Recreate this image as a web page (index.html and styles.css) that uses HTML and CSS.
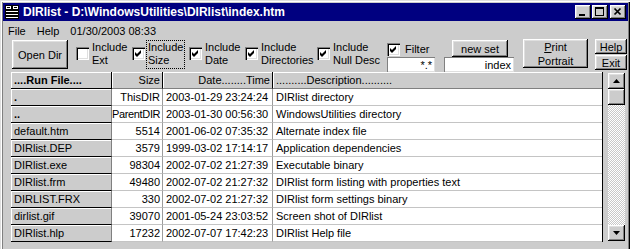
FILE: index.html
```html
<!DOCTYPE html>
<html>
<head>
<meta charset="utf-8">
<title>DIRlist</title>
<link rel="stylesheet" href="styles.css">
</head>
<body>
<div class="window">
  <div class="titlebar">
    <svg class="appicon" viewBox="0 0 16 16" width="16" height="16">
      <rect x="1" y="1" width="14" height="14" fill="#000"/>
      <rect x="2" y="2" width="5" height="3" fill="#fff"/>
      <rect x="9" y="2" width="5" height="3" fill="#fff"/>
      <rect x="3" y="3" width="3" height="1" fill="#000"/>
      <rect x="10" y="3" width="3" height="1" fill="#000"/>
      <rect x="2" y="7" width="12" height="1" fill="#fff"/>
      <rect x="2" y="10" width="12" height="1" fill="#fff"/>
      <rect x="2" y="13" width="12" height="1" fill="#fff"/>
    </svg>
    <span class="title">DIRlist - D:\WindowsUtilities\DIRlist\index.htm</span>
    <div class="wbtns">
      <span class="wbtn"><svg viewBox="0 0 16 14" width="16" height="14"><rect x="4" y="9" width="6" height="2" fill="#000"/></svg></span>
      <span class="wbtn"><svg viewBox="0 0 16 14" width="16" height="14"><rect x="3" y="2" width="9" height="2" fill="#000"/><rect x="3" y="2" width="1" height="9" fill="#000"/><rect x="11" y="2" width="1" height="9" fill="#000"/><rect x="3" y="10" width="9" height="1" fill="#000"/></svg></span>
      <span class="wbtn close"><svg viewBox="0 0 16 14" width="16" height="14"><path d="M4.5 3.5 L10.5 9.5 M10.5 3.5 L4.5 9.5" stroke="#000" stroke-width="1.7" fill="none"/></svg></span>
    </div>
  </div>

  <div class="menubar">
    <span class="mi">File</span>
    <span class="mi">Help</span>
    <span class="mi">01/30/2003 08:33</span>
  </div>

  <div class="toolbar">
    <div class="btn opendir">Open Dir</div>

    <div class="chk w-ext">
      <span class="box"></span>
      <span class="lbl">Include<br>Ext</span>
    </div>
    <div class="chk w-size">
      <span class="box"><svg viewBox="0 0 7 7" width="7" height="7"><polygon points="0,2 2,4 6,0 6,3 2,7 0,5" fill="#000"/></svg></span>
      <span class="lbl focus">Include<br>Size</span>
    </div>
    <div class="chk w-date">
      <span class="box"><svg viewBox="0 0 7 7" width="7" height="7"><polygon points="0,2 2,4 6,0 6,3 2,7 0,5" fill="#000"/></svg></span>
      <span class="lbl">Include<br>Date</span>
    </div>
    <div class="chk w-dirs">
      <span class="box"><svg viewBox="0 0 7 7" width="7" height="7"><polygon points="0,2 2,4 6,0 6,3 2,7 0,5" fill="#000"/></svg></span>
      <span class="lbl">Include<br>Directories</span>
    </div>
    <div class="chk w-null">
      <span class="box"><svg viewBox="0 0 7 7" width="7" height="7"><polygon points="0,2 2,4 6,0 6,3 2,7 0,5" fill="#000"/></svg></span>
      <span class="lbl">Include<br>Null Desc</span>
    </div>

    <div class="filtercol">
      <div class="filterrow">
        <span class="box fbox"><svg viewBox="0 0 7 7" width="7" height="7"><polygon points="0,2 2,4 6,0 6,3 2,7 0,5" fill="#000"/></svg></span>
        <span class="flbl">Filter</span>
      </div>
      <div class="tbox w-filter">*.*</div>
    </div>

    <div class="setcol">
      <div class="btn newset">new set</div>
      <div class="tbox w-index">index</div>
    </div>

    <div class="btn print"><span><u>P</u>rint</span><span>Portrait</span></div>

    <div class="hecol">
      <div class="btn small">Help</div>
      <div class="btn small exit">Exit</div>
    </div>
  </div>

  <div class="main">
    <div class="grid">
      <div class="row hd">
        <div class="c fx b">....Run File....</div>
        <div class="c r">Size</div>
        <div class="c r">Date........Time</div>
        <div class="c last">..........Description..........</div>
      </div>
      <div class="row">
        <div class="c fx b">.</div>
        <div class="c r">ThisDIR</div>
        <div class="c">2003-01-29 23:24:24</div>
        <div class="c last">DIRlist directory</div>
      </div>
      <div class="row">
        <div class="c fx b">..</div>
        <div class="c r tight">ParentDIR</div>
        <div class="c">2003-01-30 00:56:30</div>
        <div class="c last">WindowsUtilities directory</div>
      </div>
      <div class="row">
        <div class="c fx">default.htm</div>
        <div class="c r">5514</div>
        <div class="c">2001-06-02 07:35:32</div>
        <div class="c last">Alternate index file</div>
      </div>
      <div class="row">
        <div class="c fx">DIRlist.DEP</div>
        <div class="c r">3579</div>
        <div class="c">1999-03-02 17:14:17</div>
        <div class="c last">Application dependencies</div>
      </div>
      <div class="row">
        <div class="c fx">DIRlist.exe</div>
        <div class="c r">98304</div>
        <div class="c">2002-07-02 21:27:39</div>
        <div class="c last">Executable binary</div>
      </div>
      <div class="row">
        <div class="c fx">DIRlist.frm</div>
        <div class="c r">49480</div>
        <div class="c">2002-07-02 21:27:32</div>
        <div class="c last">DIRlist form listing with properties text</div>
      </div>
      <div class="row">
        <div class="c fx">DIRLIST.FRX</div>
        <div class="c r">330</div>
        <div class="c">2002-07-02 21:27:32</div>
        <div class="c last">DIRlist form settings binary</div>
      </div>
      <div class="row">
        <div class="c fx">dirlist.gif</div>
        <div class="c r">39070</div>
        <div class="c">2001-05-24 23:03:52</div>
        <div class="c last">Screen shot of DIRlist</div>
      </div>
      <div class="row">
        <div class="c fx">DIRlist.hlp</div>
        <div class="c r">17232</div>
        <div class="c">2002-07-07 17:42:23</div>
        <div class="c last">DIRlist Help file</div>
      </div>
    </div>

    <div class="scrollbar">
      <div class="sbtn"><svg viewBox="0 0 7 4" width="7" height="4"><polygon points="3.5,0 7,4 0,4" fill="#000"/></svg></div>
      <div class="sbtn thumb"></div>
      <div class="track"></div>
      <div class="sbtn"><svg viewBox="0 0 7 4" width="7" height="4"><polygon points="0,0 7,0 3.5,4" fill="#000"/></svg></div>
    </div>
  </div>
</div>
</body>
</html>
```

FILE: styles.css
```css
* { box-sizing: border-box; }

html, body {
  margin: 0;
  padding: 0;
}

body {
  width: 630px;
  height: 249px;
  overflow: hidden;
  background: #cccccc;
  font-family: "Liberation Sans", Arial, sans-serif;
  font-size: 11px;
  color: #000;
}

.window {
  width: 630px;
  height: 249px;
  background: #cccccc;
  padding: 3px 2px 0 3px;
  overflow: hidden;
  box-shadow:
    inset 1px 1px 0 #dfdfdf,
    inset 2px 2px 0 #ffffff,
    inset 3px 0 0 #808080,
    inset -1px 0 0 #000000,
    inset -2px 0 0 #808080;
}

/* ---------- title bar ---------- */
.titlebar {
  height: 18px;
  background: #000080;
  color: #fff;
  display: flex;
  align-items: center;
  padding-left: 1px;
}

.appicon {
  flex-shrink: 0;
  margin-right: 3px;
}

.title {
  flex: 1;
  font-weight: bold;
  font-size: 12px;
  line-height: 18px;
  white-space: nowrap;
}

.wbtns {
  display: flex;
  margin-right: 2px;
}

.wbtn {
  width: 16px;
  height: 14px;
  background: #cccccc;
  display: flex;
  box-shadow:
    inset -1px -1px 0 #000,
    inset 1px 1px 0 #fff,
    inset -2px -2px 0 #808080,
    inset 2px 2px 0 #dfdfdf;
}

.wbtn + .wbtn { margin-left: 1px; }
.wbtn.close { margin-left: 2px; }

/* ---------- menu ---------- */
.menubar {
  height: 16px;
  padding: 4px 0 0 5px;
  line-height: 12px;
  display: flex;
  white-space: nowrap;
}

.mi { margin-right: 11px; }

/* ---------- toolbar ---------- */
.toolbar {
  height: 35px;
  display: flex;
  align-items: flex-start;
}

.toolbar > * { flex-shrink: 0; }

.btn {
  background: #cccccc;
  display: flex;
  align-items: center;
  justify-content: center;
  white-space: nowrap;
  box-shadow:
    inset -1px -1px 0 #000,
    inset 1px 1px 0 #fff,
    inset -2px -2px 0 #808080,
    inset 2px 2px 0 #dfdfdf;
}

.opendir {
  margin-left: 9px;
  margin-top: 3px;
  width: 56px;
  height: 29px;
}

.chk {
  display: flex;
  align-items: flex-start;
  margin-top: 3px;
}

.w-ext  { margin-left: 8px; width: 56px; }
.w-size { width: 57px; }
.w-date { width: 56px; }
.w-dirs { width: 72px; }
.w-null { width: 70px; }

.box {
  width: 13px;
  height: 13px;
  flex-shrink: 0;
  background: #fff;
  margin-top: 7px;
  margin-right: 1px;
  display: flex;
  align-items: center;
  justify-content: center;
  box-shadow:
    inset 1px 1px 0 #808080,
    inset 2px 2px 0 #000,
    inset -1px -1px 0 #fff,
    inset -2px -2px 0 #dfdfdf;
}

.lbl {
  line-height: 13px;
  padding: 0 1px 1px 1px;
  border: 1px dotted transparent;
  white-space: nowrap;
}

.lbl.focus { border-color: #000; }

.filtercol {
  margin-top: 6px;
  width: 49px;
}

.filterrow {
  display: flex;
  align-items: center;
  height: 13px;
}

.fbox {
  margin-top: 0;
  margin-right: 5px;
}

.flbl { line-height: 13px; }

.tbox {
  height: 15px;
  background: #fff;
  text-align: right;
  padding: 1px 3px 0 0;
  line-height: 14px;
  white-space: nowrap;
  box-shadow:
    inset 1px 1px 0 #808080,
    inset -1px -1px 0 #dfdfdf;
}

.w-filter {
  margin-top: 1px;
  width: 48px;
}

.setcol {
  margin-left: 8px;
  margin-top: 3px;
  width: 70px;
}

.newset {
  margin-left: 8px;
  width: 56px;
  height: 17px;
}

.w-index { width: 70px; }

.print {
  margin-left: 9px;
  margin-top: 2px;
  width: 65px;
  height: 29px;
  flex-direction: column;
  line-height: 14px;
}

.hecol {
  margin-left: 7px;
  margin-top: 2px;
  width: 32px;
}

.small { height: 15px; }
.exit { margin-top: 1px; }

/* ---------- grid ---------- */
.main {
  display: flex;
  align-items: flex-start;
}

.grid {
  margin-left: 8px;
  width: 592px;
  border-right: 1px solid #000;
}

.row {
  display: grid;
  grid-template-columns: 101px 51px 110px 1fr;
  height: 17px;
}

.c {
  background: #fff;
  border-right: 1px solid #9c9c9c;
  border-bottom: 1px solid #c4c4c4;
  line-height: 16px;
  padding: 0 3px;
  white-space: nowrap;
  overflow: hidden;
}

.c.r { text-align: right; padding-right: 2px; }
.c.tight { padding-left: 0; letter-spacing: -0.35px; }
.c.last { border-right: 0; }
.c.b { font-weight: bold; }

.c.fx {
  background: #cccccc;
  border-right: 1px solid #808080;
  border-bottom: 1px solid #000;
  box-shadow: inset 1px 1px 0 #fff;
}

.hd .c {
  background: #cccccc;
  border-right: 1px solid #000;
  border-bottom: 1px solid #808080;
  box-shadow: inset 1px 1px 0 #fff;
  padding-top: 1px;
  line-height: 15px;
}

.hd .c.fx { border-bottom-color: #000; }
.hd .c.last { border-right: 0; }

/* ---------- scrollbar ---------- */
.scrollbar {
  margin-left: 5px;
  margin-top: 1px;
  width: 17px;
  height: 168px;
  display: flex;
  flex-direction: column;
  background: repeating-conic-gradient(#fff 0 25%, #c8c8c8 0 50%) 0 0 / 2px 2px;
}

.sbtn {
  height: 16px;
  flex-shrink: 0;
  background: #cccccc;
  display: flex;
  align-items: center;
  justify-content: center;
  box-shadow:
    inset -1px -1px 0 #000,
    inset 1px 1px 0 #fff,
    inset -2px -2px 0 #808080,
    inset 2px 2px 0 #dfdfdf;
}

.track { flex: 1; }
```
